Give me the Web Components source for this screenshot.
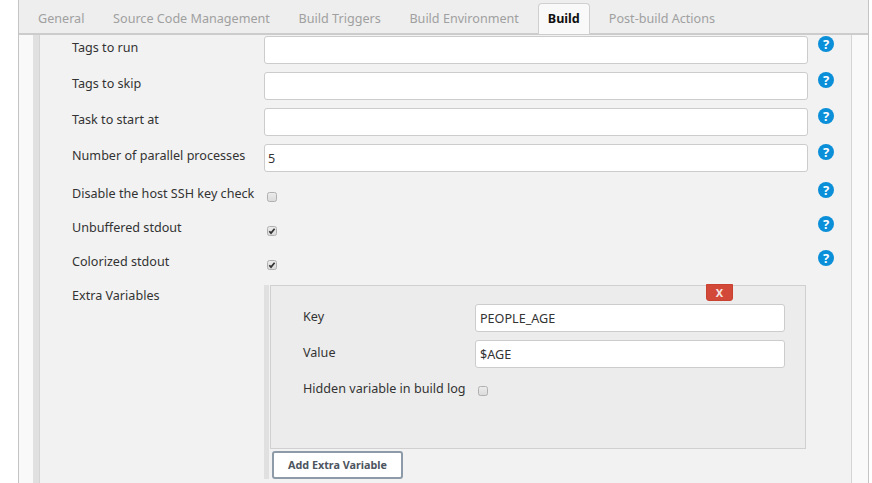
<!DOCTYPE html>
<html><head><meta charset="utf-8">
<style>
html,body{margin:0;padding:0;background:#fff;overflow:hidden;height:483px}
body{font:12.6px/18px "Noto Sans",sans-serif;color:#333}
</style></head><body>
<config-panel>
  <tab-bar slot="tabs">
    <tab-item>General</tab-item><tab-item>Source Code Management</tab-item><tab-item>Build Triggers</tab-item><tab-item>Build Environment</tab-item><tab-item active>Build</tab-item><tab-item>Post-build Actions</tab-item>
  </tab-bar>
  <form-row label="Tags to run"><text-box></text-box></form-row>
  <form-row label="Tags to skip"><text-box></text-box></form-row>
  <form-row label="Task to start at"><text-box></text-box></form-row>
  <form-row last label="Number of parallel processes"><text-box>5</text-box></form-row>
  <form-row check label="Disable the host SSH key check"><check-box></check-box></form-row>
  <form-row check label="Unbuffered stdout"><check-box checked></check-box></form-row>
  <form-row check label="Colorized stdout"><check-box checked></check-box></form-row>
  <repeat-section label="Extra Variables">
    <var-row label="Key"><text-box>PEOPLE_AGE</text-box></var-row>
    <var-row label="Value"><text-box>$AGE</text-box></var-row>
    <var-row check label="Hidden variable in build log"><check-box></check-box></var-row>
  </repeat-section>
</config-panel>
<script>
function def(name,html,init){
  const t=document.createElement('template');t.innerHTML=html;
  customElements.define(name,class extends HTMLElement{
    constructor(){super();this.attachShadow({mode:'open'}).appendChild(t.content.cloneNode(true));}
    connectedCallback(){
      const r=this.shadowRoot;
      r.querySelectorAll('[data-label]').forEach(e=>e.textContent=this.getAttribute('label')||'');
      if(init)init(this,r);
    }
  });
}
def('config-panel',`<style>
:host{display:block;margin-left:18px;width:851px;box-sizing:border-box;height:483px;border-left:1px solid #c4c4c4;border-right:1px solid #c4c4c4;background:#f9f9f9;overflow:hidden}
.body{margin:0 16px 0 14px;border-left:6px solid #e0e0e0;}
.inner{border-left:1px solid #d4d4d4;border-right:1px solid #d4d4d4;background:#f2f2f2;padding:1px 0 40px}
</style><slot name="tabs"></slot><div class="body"><div class="inner"><slot></slot></div></div>`);
def('tab-bar',`<style>
:host{display:flex;box-sizing:border-box;height:35px;background:#eee;border-bottom:2px solid #ccc;padding:3px 0 0 7px}
</style><slot></slot>`);
def('tab-item',`<style>
:host{display:block;box-sizing:border-box;height:31px;padding:6px 11px 0;margin-right:4.7px;border:1px solid transparent;border-bottom:0;border-radius:4px 4px 0 0;color:#a0a0a0;white-space:nowrap}
:host([active]){background:#f9f9f9;border-color:#d0d0d0;color:#111;font-weight:700;padding:6px 9px 0;margin:0 7px 0 2.2px}
</style><slot></slot>`);
def('form-row',`<style>
:host{display:grid;grid-template-columns:192px 544px 18px;height:36px;padding-left:32px;box-sizing:border-box}
:host([last]){height:35px}
:host([check]){height:34px}
.l{padding-top:3px;white-space:nowrap}
:host([check]) .l{padding-top:6px}
:host([check]) .c{padding-top:9px}
:host([check]) .h{padding-top:3px}
.h{padding:0 0 0 10px}
</style><div class="l" data-label></div><div class="c"><slot></slot></div><div class="h"><help-icon></help-icon></div>`);
def('text-box',`<style>
:host{display:block;box-sizing:border-box;height:28px;background:#fff;border:1px solid #ccc;border-radius:3px;padding:5px var(--tb-pad,3px);color:#333;line-height:18px}
</style><slot></slot>`);
def('check-box',`<style>
:host{display:block;box-sizing:border-box;width:10px;height:10px;margin:4px 0 0 3px}
svg{display:block}
</style><svg width="10" height="10" viewBox="0 0 10 10"><defs><linearGradient id="g" x1="0" y1="0" x2="0" y2="1"><stop offset="0" stop-color="#ececec"/><stop offset="1" stop-color="#dadada"/></linearGradient></defs><rect x=".5" y=".5" width="9" height="9" rx="2" fill="url(#g)" stroke="#b0b0b0"/><path class="m" d="M2.3 5.2l1.7 1.9L7.6 2.7" fill="none" stroke="#333" stroke-width="1.7"/></svg>`,
(h,r)=>{if(!h.hasAttribute('checked'))r.querySelector('.m')?.remove();});
def('help-icon',`<style>
:host{display:block;width:16px;height:16px}
svg{display:block}
text{font:700 13px "Noto Sans",sans-serif;fill:#fff;text-anchor:middle}
</style><svg width="16" height="16" viewBox="0 0 16 16"><circle cx="8" cy="8" r="8" fill="#0b8fd9"/><text x="8" y="12.5">?</text></svg>`);
def('repeat-section',`<style>
:host{display:grid;grid-template-columns:192px auto;padding:4px 0 0 32px;height:210px;box-sizing:border-box}
.l{padding-top:2px}
.wrap{width:542px;border-left:5px solid #e0e0e0;height:194px;padding-left:1px;box-sizing:border-box}
.box{position:relative;box-sizing:border-box;height:164px;background:#ececec;border:1px solid #d0d0d0;padding:18px 20px 0 32px}
.x{position:absolute;top:-2px;right:72px;width:27px;height:17px;box-sizing:border-box;background:#d24939;border:1px solid #c9412f;border-radius:0 0 3px 3px;color:#f6e6e4;font:700 11px/15px "Noto Sans",sans-serif;text-align:center}
.btn{display:block;box-sizing:border-box;margin:2px 0 0 2px;width:131px;height:28px;background:#fff;border:2px solid #8d9ba8;border-radius:3px;color:#4d5560;font:700 10.8px/24px "Noto Sans",sans-serif;text-align:center}
</style><div class="l" data-label></div><div class="wrap"><div class="box"><div class="x">X</div><slot></slot></div><div class="btn">Add Extra Variable</div></div>`);
def('var-row',`<style>
:host{display:grid;grid-template-columns:173px 309px;height:36px;--tb-pad:4px}
.l{padding-top:4px;white-space:nowrap}
.c{margin-left:-1px}
:host([check]) .c{padding-top:6px}
:host([check]) .c ::slotted(*){margin-left:3px}
</style><div class="l" data-label></div><div class="c"><slot></slot></div>`);
</script>
</body></html>
